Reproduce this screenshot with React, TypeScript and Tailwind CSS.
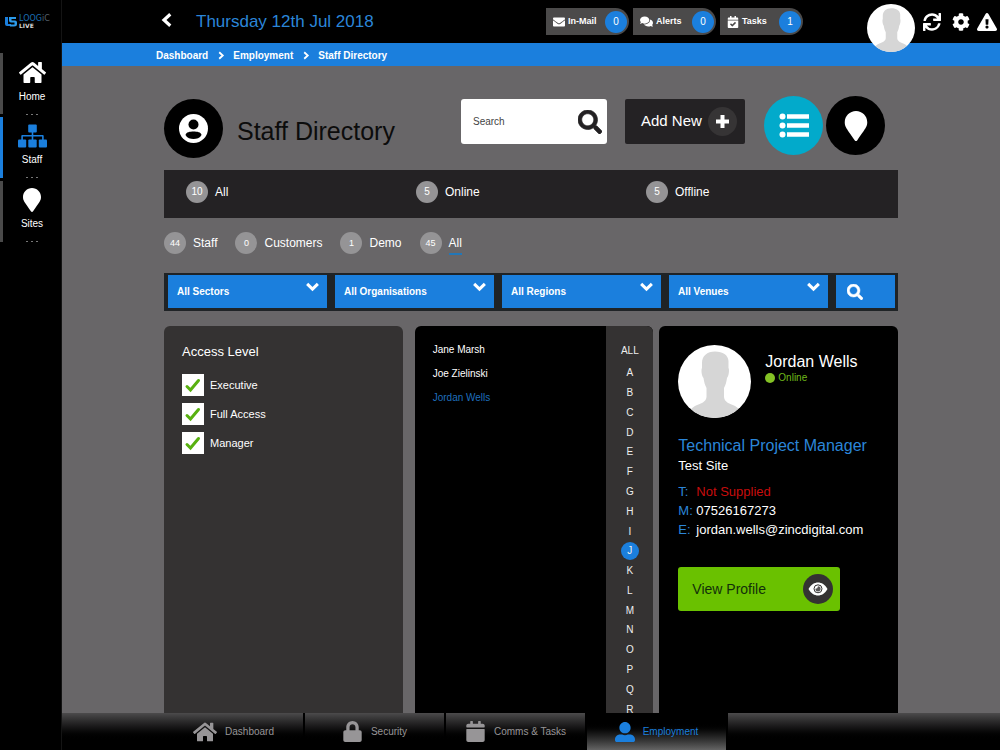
import React from "react";
import {
  FaCalendar,
  FaCalendarCheck,
  FaCog,
  FaComments,
  FaEnvelope,
  FaExclamationTriangle,
  FaHome,
  FaLock,
  FaMapMarker,
  FaSearch,
  FaSync,
  FaUserAlt,
} from "react-icons/fa";

const letters = "ABCDEFGHIJKLMNOPQR".split("");

const chevronPaths = {
  left: "M9 2L3.500 7L9 12",
  right: "M5 2L10.500 7L5 12",
  down: "M2 4.500L7 9.500L12 4.500",
};

function Chevron({ to, className }: { to: keyof typeof chevronPaths; className: string }) {
  return (
    <svg viewBox="0 0 14 14" className={className} fill="none" stroke="currentColor" strokeWidth="2.800" aria-hidden="true">
      <path d={chevronPaths[to]} />
    </svg>
  );
}

function OrgChart() {
  return (
    <svg viewBox="0 0 29 24" className="h-6 w-[29px]" fill="#1b7fdd" aria-hidden="true">
      <rect x="10.200" y="0.500" width="8.600" height="8" rx="1" />
      <rect x="0" y="15.500" width="8.200" height="8" rx="1" />
      <rect x="10.300" y="15.500" width="8.400" height="8" rx="1" />
      <rect x="20.800" y="15.500" width="8.200" height="8" rx="1" />
      <path d="M13.700 8H15.300V11H24.800Q25.700 11 25.700 12V16H24.100V12.600H15.300V16H13.700V12.600H4.900V16H3.300V12Q3.300 11 4.200 11H13.700Z" />
    </svg>
  );
}

function Silhouette({ className }: { className: string }) {
  return (
    <svg viewBox="0 0 73 73" className={className} aria-hidden="true">
      <defs>
        <clipPath id="avatarDisc">
          <circle cx="36.500" cy="36.500" r="36.500" />
        </clipPath>
      </defs>
      <circle cx="36.500" cy="36.500" r="36.500" fill="#fff" />
      <g clipPath="url(#avatarDisc)">
        <path
          d="M37 6.500C29 6.500 24 11 24 18V23C23 24 23.500 31 25.500 33C26 37 27 40 28.500 43V52C28 57 23 58.500 18 60.500C14 62.500 11 65 10 73H64C63 65 60 62.500 56 60.500C51 58.500 46.500 57 46 52V43C47.500 40 48.500 37 49 33C51 31 51.500 24 50.500 23V16C50 10 45 6.500 37 6.500Z"
          fill="#d6d6d6"
        />
      </g>
    </svg>
  );
}

function Logo() {
  return (
    <a href="#home" aria-label="Loogic Live" className="flex h-[43px] items-center gap-[2px] pl-[5px]">
      <svg viewBox="0 0 12 11" className="h-[11px] w-3 shrink-0" aria-hidden="true">
        <path d="M0 1H3V8H6V10H2Q0 10 0 8Z" fill="#1b7fdd" />
        <path d="M4 1H11V3H6.500V4.500H10Q12 4.500 12 6.500V8Q12 10.500 9 10.500H5V8.500H9.500V6.500H6Q4 6.500 4 4.500Z" fill="#2c9bea" />
      </svg>
      <span className="flex flex-col font-['DejaVu_Sans'] text-[8px] leading-[8px]">
        <span className="text-[#1b6fb5]">
          LOOG<span className="text-[#56606a]">iC</span>
        </span>
        <span className="text-[6px] leading-[6px] font-bold text-[#d5d5d5]">LIVE</span>
      </span>
    </a>
  );
}

const sideItems = [
  { label: "Home", icon: <FaHome size={27} />, active: false },
  { label: "Staff", icon: <OrgChart />, active: true },
  { label: "Sites", icon: <FaMapMarker size={24} />, active: false },
];

function Sidebar() {
  return (
    <aside className="w-[62px] shrink-0 border-r border-[#141414] bg-black text-white">
      <Logo />
      <nav className="mt-2.5 flex flex-col gap-[3px]">
        {sideItems.map((item) => (
          <a
            key={item.label}
            href={"#" + item.label.toLowerCase()}
            className={
              "flex h-[61px] flex-col items-center border-l-[3px] pt-1.5 text-[10px] leading-3 " +
              (item.active ? "border-[#1b7fdd]" : "border-[#4a4a4a]")
            }
          >
            <span className="flex h-[26px] items-center">{item.icon}</span>
            <span className="mt-1.5">{item.label}</span>
            <span className="mt-[11px] flex gap-[3px]" aria-hidden="true">
              <i className="h-px w-[2px] bg-[#777]" />
              <i className="h-px w-[2px] bg-[#777]" />
              <i className="h-px w-[2px] bg-[#777]" />
            </span>
          </a>
        ))}
      </nav>
    </aside>
  );
}

const pills = [
  { label: "In-Mail", count: 0, icon: <FaEnvelope size={12} /> },
  { label: "Alerts", count: 0, icon: <FaComments size={13} /> },
  { label: "Tasks", count: 1, icon: <FaCalendarCheck size={12} /> },
];

function Header() {
  return (
    <header className="flex h-[43px] shrink-0 items-center bg-black pr-[3px] pl-[98px] text-white">
      <button aria-label="Back" className="pb-1">
        <Chevron to="left" className="size-4" />
      </button>
      <span className="ml-5 text-[17px] text-[#2b86d9]">Thursday 12th Jul 2018</span>
      <div className="ml-auto flex gap-1">
        {pills.map((p) => (
          <button
            key={p.label}
            className="flex h-[27px] w-[83px] items-center gap-[3px] rounded-l-[3px] rounded-r-full bg-[#4b4a4a] pr-0.5 pl-[7px] text-[9px] font-bold"
          >
            {p.icon}
            {p.label}
            <span className="ml-auto flex size-[22px] items-center justify-center rounded-full bg-[#1b7fdd] text-[10px] font-normal">
              {p.count}
            </span>
          </button>
        ))}
      </div>
      <div className="z-10 ml-16 h-[35px] w-12">
        <Silhouette className="size-12" />
      </div>
      <div className="ml-2 flex items-center gap-[11px]">
        <button aria-label="Refresh">
          <FaSync size={18} />
        </button>
        <button aria-label="Settings">
          <FaCog size={18} />
        </button>
        <button aria-label="Warnings" className="-ml-1">
          <FaExclamationTriangle size={20} />
        </button>
      </div>
    </header>
  );
}

function Breadcrumb() {
  return (
    <nav className="flex h-[23px] shrink-0 items-center gap-2 bg-[#1b7fdd] pt-px pl-[94px] text-[10px] font-bold text-white">
      <a href="#dashboard">Dashboard</a>
      <Chevron to="right" className="size-[9px]" />
      <a href="#employment">Employment</a>
      <Chevron to="right" className="size-[9px]" />
      <a href="#directory">Staff Directory</a>
    </nav>
  );
}

function Count({ n, small }: { n: number; small?: boolean }) {
  return (
    <span
      className={
        "flex size-[22px] items-center justify-center rounded-full bg-[#959496] text-white " +
        (small ? "text-[9px]" : "text-[10px]")
      }
    >
      {n}
    </span>
  );
}

function TitleRow() {
  return (
    <div className="flex items-start pr-[13px]">
      <div className="mt-[3px] flex items-center">
        <span className="flex size-[59px] items-center justify-center rounded-full bg-black">
          <svg viewBox="0 0 29 29" className="size-[29px]" aria-hidden="true">
            <circle cx="14.500" cy="14.500" r="14.500" fill="#fff" />
            <circle cx="14.500" cy="10.500" r="5" fill="#000" />
            <path d="M6.500 21C7 18 11 17.500 14.500 17.500S22 18 22.500 21C21 24 17.500 25 14.500 25S8 24 6.500 21Z" fill="#000" />
          </svg>
        </span>
        <h1 className="mt-1 ml-3.5 text-[25px] leading-8 whitespace-nowrap text-[#0c0c0c]">Staff Directory</h1>
      </div>
      <div className="mt-[3px] ml-auto flex h-[45px] w-[146px] items-center rounded-[3px] bg-white pr-[5px] pl-3">
        <input
          type="text"
          aria-label="Search"
          placeholder="Search"
          className="w-full min-w-0 text-[10px] text-[#444] outline-none placeholder:text-[#444]"
        />
        <button aria-label="Run search" className="text-[#232123]">
          <FaSearch size={24} stroke="currentColor" strokeWidth={14} />
        </button>
      </div>
      <button className="mt-[3px] ml-[18px] flex h-[45px] w-[120px] items-center justify-between rounded-[2px] bg-[#242224] pr-2 pl-4 text-[15px] whitespace-nowrap text-white">
        Add New
        <span className="flex size-[29px] items-center justify-center rounded-full bg-[#363435]">
          <svg viewBox="0 0 13 13" className="size-[13px]" fill="#fff" aria-hidden="true">
            <path d="M4.500 0H8.500V4.500H13V8.500H8.500V13H4.500V8.500H0V4.500H4.500Z" />
          </svg>
        </span>
      </button>
      <button aria-label="List view" className="ml-[19px] flex size-[59px] items-center justify-center rounded-full bg-[#02aacb]">
        <svg viewBox="0 0 30 25" className="h-[25px] w-[30px]" fill="#fff" aria-hidden="true">
          <circle cx="3.500" cy="3.500" r="3" />
          <circle cx="3.500" cy="12.500" r="3" />
          <circle cx="3.500" cy="21.500" r="3" />
          <path d="M8 1.200H30V5.800H8ZM8 10.200H30V14.800H8ZM8 19.200H30V23.800H8Z" />
        </svg>
      </button>
      <button aria-label="Map view" className="ml-[3px] flex size-[59px] items-center justify-center rounded-full bg-black text-white">
        <FaMapMarker size={30} />
      </button>
    </div>
  );
}

const statuses = [
  { label: "All", n: 10 },
  { label: "Online", n: 5 },
  { label: "Offline", n: 5 },
];

const groups = [
  { label: "Staff", n: 44 },
  { label: "Customers", n: 0 },
  { label: "Demo", n: 1 },
  { label: "All", n: 45 },
];

const filters = ["All Sectors", "All Organisations", "All Regions", "All Venues"];

function Filters() {
  return (
    <>
      <div className="mt-3 grid h-12 shrink-0 grid-cols-3 items-start bg-[#242224] px-[22px] pt-[11px] text-xs text-white">
        {statuses.map((s) => (
          <button key={s.label} className="flex items-center gap-[7px]">
            <Count n={s.n} />
            {s.label}
          </button>
        ))}
      </div>
      <div className="mt-[13px] flex gap-[18px] text-xs text-white">
        {groups.map((g) => (
          <button key={g.label} className="flex items-center gap-[7px]">
            <Count n={g.n} small />
            <span className={g.label === "All" ? "border-y-2 border-t-transparent border-b-[#2277b8] leading-5" : "leading-5"}>
              {g.label}
            </span>
          </button>
        ))}
      </div>
      <div className="mt-[18px] flex shrink-0 gap-2 bg-[#1f2326] pt-[2px] pr-[3px] pb-[3px] pl-1">
        {filters.map((f) => (
          <div key={f} className="relative min-w-0 flex-1">
            <select
              aria-label={f}
              className="block h-[33px] w-full appearance-none bg-[#1b7fdd] pr-6 pl-[9px] text-[10px] font-bold text-white"
            >
              <option>{f}</option>
            </select>
            <Chevron to="down" className="pointer-events-none absolute top-1 right-[7px] size-[15px] text-white" />
          </div>
        ))}
        <button aria-label="Apply filters" className="flex h-[33px] w-[59px] items-center bg-[#1b7fdd] pl-[11px] text-white">
          <FaSearch size={16} stroke="currentColor" strokeWidth={16} />
        </button>
      </div>
    </>
  );
}

function AccessCard() {
  return (
    <section className="min-w-0 rounded-t-md bg-[#343232] px-[18px] pt-4 text-white">
      <h2 className="text-[13px] leading-5">Access Level</h2>
      <div className="mt-3 flex flex-col gap-[7px]">
        {["Executive", "Full Access", "Manager"].map((level) => (
          <label key={level} className="flex items-center gap-1.5 text-[11px]">
            <span className="relative size-[22px]">
              <input type="checkbox" defaultChecked className="peer block size-[22px] appearance-none bg-white" />
              <svg
                viewBox="0 0 22 22"
                className="pointer-events-none absolute inset-0 hidden size-[22px] peer-checked:block"
                fill="none"
                stroke="#58b110"
                strokeWidth="3"
                strokeLinecap="round"
                aria-hidden="true"
              >
                <path d="M5 12.500L8.500 16L16.500 6.500" />
              </svg>
            </span>
            {level}
          </label>
        ))}
      </div>
    </section>
  );
}

function PeopleCard() {
  return (
    <section className="ml-3 flex min-w-0 overflow-hidden rounded-t-md bg-black text-[10px] text-white">
      <ul className="min-w-0 flex-1 pt-3 pl-[18px] leading-6">
        {["Jane Marsh", "Joe Zielinski", "Jordan Wells"].map((name) => (
          <li key={name}>
            <a href="#profile" className={name === "Jordan Wells" ? "text-[#1f6fbd]" : ""}>
              {name}
            </a>
          </li>
        ))}
      </ul>
      <div className="flex w-[47px] shrink-0 flex-col items-center bg-[#343232] pt-3.5 text-[#eee]">
        <button className="h-5 shrink-0">ALL</button>
        <div className="mt-[3px] grid h-[356px] shrink-0 auto-rows-fr place-items-center">
          {letters.map((l) => (
            <button
              key={l}
              className={
                "flex size-[18px] items-center justify-center rounded-full " + (l === "J" ? "bg-[#1b7fdd]" : "")
              }
            >
              {l}
            </button>
          ))}
        </div>
      </div>
    </section>
  );
}

const contacts = [
  { key: "T:", value: "Not Supplied", tone: "text-[#c80d0d]" },
  { key: "M:", value: "07526167273", tone: "" },
  { key: "E:", value: "jordan.wells@zincdigital.com", tone: "" },
];

function ProfileCard() {
  return (
    <section className="ml-1.5 min-w-0 rounded-t-md bg-black pt-[19px] pl-[19px] text-[13px] text-white">
      <div className="flex">
        <Silhouette className="size-[73px] shrink-0" />
        <div className="mt-2 ml-3.5">
          <h2 className="text-base leading-[18px]">Jordan Wells</h2>
          <p className="flex items-center gap-[3px] text-[10px] leading-[14px] text-[#6fb81a]">
            <i className="size-[10px] rounded-full bg-[#84c225]" />
            Online
          </p>
        </div>
      </div>
      <h3 className="mt-[18px] text-base leading-5 text-[#2b86d9]">Technical Project Manager</h3>
      <p className="leading-5">Test Site</p>
      <dl className="mt-1.5 grid grid-cols-[18px_1fr] leading-[19px]">
        {contacts.map((c) => (
          <React.Fragment key={c.key}>
            <dt className="text-[#2b86d9]">{c.key}</dt>
            <dd className={c.tone}>{c.value}</dd>
          </React.Fragment>
        ))}
      </dl>
      <button className="mt-7 flex h-11 w-[162px] items-center justify-between rounded-[3px] bg-[#6ac100] pr-[7px] pl-3.5 text-sm text-[#12300a]">
        View Profile
        <span className="flex size-[30px] items-center justify-center rounded-full bg-[#343232]">
          <svg viewBox="0 0 20 14" className="h-3.5 w-5" aria-hidden="true">
            <path d="M0.500 7C3 2.500 6.500 0.500 10 0.500S17 2.500 19.500 7C17 11.500 13.500 13.500 10 13.500S3 11.500 0.500 7Z" fill="#fff" />
            <circle cx="10" cy="6.800" r="4" fill="none" stroke="#343232" strokeWidth="1" />
            <path d="M10 4.200A2.600 2.600 0 1 1 7.400 6.800Q9.800 6.800 10 4.200Z" fill="#5a5858" />
          </svg>
        </span>
      </button>
    </section>
  );
}

const tabs = [
  { label: "Dashboard", icon: <FaHome size={24} />, active: false },
  { label: "Security", icon: <FaLock size={21} />, active: false },
  { label: "Comms & Tasks", icon: <FaCalendar size={21} />, active: false },
  { label: "Employment", icon: <FaUserAlt size={20} />, active: true },
];

function BottomTabs() {
  return (
    <nav className="flex h-[37px] shrink-0 bg-linear-to-b from-[#4c4b4c] to-black to-75% pl-[102px] text-[10px]">
      {tabs.map((t) => (
        <a
          key={t.label}
          href={"#" + t.label.split(" ")[0].toLowerCase()}
          className={
            "flex w-[141px] items-center justify-center gap-2 border-r-2 border-black whitespace-nowrap " +
            (t.active
              ? "bg-linear-to-b from-black from-25% to-[#646464] text-[#1b7fdd]"
              : "text-[#979597]")
          }
        >
          {t.icon}
          {t.label}
        </a>
      ))}
    </nav>
  );
}

export default function App() {
  return (
    <div className="flex h-screen overflow-hidden bg-[#686668] font-['Liberation_Sans',Arial,sans-serif]">
      <Sidebar />
      <div className="flex min-w-0 flex-1 flex-col">
        <Header />
        <Breadcrumb />
        <main className="flex min-h-0 flex-1 flex-col overflow-hidden px-[102px] pt-[30px]">
          <TitleRow />
          <Filters />
          <div className="mt-[15px] grid min-h-0 flex-1 grid-cols-[239fr_251fr_245fr] grid-rows-[100%]">
            <AccessCard />
            <PeopleCard />
            <ProfileCard />
          </div>
        </main>
        <BottomTabs />
      </div>
    </div>
  );
}
